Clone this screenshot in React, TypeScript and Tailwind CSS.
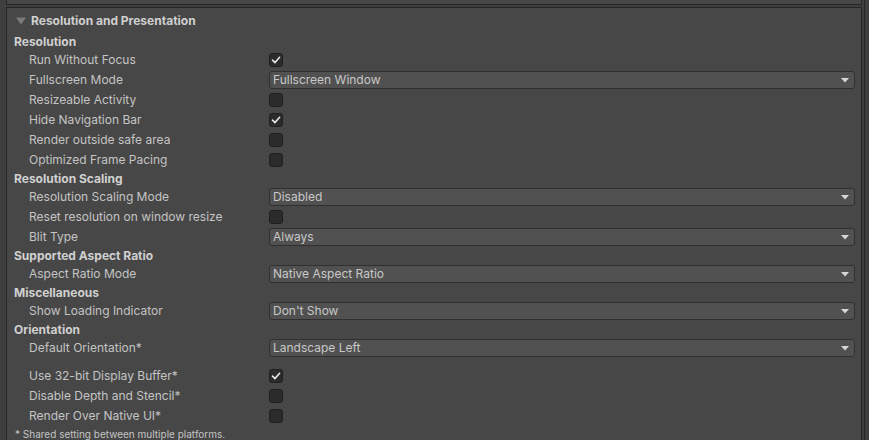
import React from "react";

type Row =
  | { kind: "header"; text: string }
  | { kind: "check"; label: string; checked: boolean }
  | { kind: "drop"; label: string; value: string }
  | { kind: "gap" };

const rows: Row[] = [
  { kind: "header", text: "Resolution" },
  { kind: "check", label: "Run Without Focus", checked: true },
  { kind: "drop", label: "Fullscreen Mode", value: "Fullscreen Window" },
  { kind: "check", label: "Resizeable Activity", checked: false },
  { kind: "check", label: "Hide Navigation Bar", checked: true },
  { kind: "check", label: "Render outside safe area", checked: false },
  { kind: "check", label: "Optimized Frame Pacing", checked: false },
  { kind: "header", text: "Resolution Scaling" },
  { kind: "drop", label: "Resolution Scaling Mode", value: "Disabled" },
  { kind: "check", label: "Reset resolution on window resize", checked: false },
  { kind: "drop", label: "Blit Type", value: "Always" },
  { kind: "header", text: "Supported Aspect Ratio" },
  { kind: "drop", label: "Aspect Ratio Mode", value: "Native Aspect Ratio" },
  { kind: "header", text: "Miscellaneous" },
  { kind: "drop", label: "Show Loading Indicator", value: "Don't Show" },
  { kind: "header", text: "Orientation" },
  { kind: "drop", label: "Default Orientation*", value: "Landscape Left" },
  { kind: "gap" },
  { kind: "check", label: "Use 32-bit Display Buffer*", checked: true },
  { kind: "check", label: "Disable Depth and Stencil*", checked: false },
  { kind: "check", label: "Render Over Native UI*", checked: false },
];

function Check({ checked }: { checked: boolean }) {
  return (
    <div className="w-[14px] h-[14px] rounded-[3px] bg-[#2b2b2b] border border-[#1f1f1f] flex items-center justify-center">
      {checked && (
        <svg width="10" height="10" viewBox="0 0 10 10">
          <path d="M1.5 5.2 L4 7.6 L8.6 2.3" fill="none" stroke="#e8e8e8" strokeWidth="1.6" strokeLinecap="round" strokeLinejoin="round" />
        </svg>
      )}
    </div>
  );
}

function Drop({ value }: { value: string }) {
  return (
    <div className="flex-1 h-[18px] rounded-[3px] bg-[#515151] border border-[#303030] flex items-center pl-[3px] pr-[5px] text-[#c8c8c8]">
      <span className="flex-1 leading-none">{value}</span>
      <svg width="8" height="5" viewBox="0 0 8 5">
        <path d="M0 0 L8 0 L4 4.5 Z" fill="#d6d6d6" />
      </svg>
    </div>
  );
}

export default function App() {
  return (
    <div
      className="w-[869px] h-[440px] bg-[#3f3f3f] overflow-hidden flex text-[12px] text-[#c4c4c4]"
      style={{ fontFamily: "Inter, 'Noto Sans', sans-serif" }}
    >
      <div className="pl-[6px] flex flex-col">
        <div className="w-[856px] h-[5px] bg-[#474747] border-l border-r border-b border-[#262626] shrink-0" />
        <div className="h-[2px] shrink-0" />
        <div className="w-[856px] flex-1 bg-[#474747] border border-[#262626] flex flex-col pt-[1px]">
          <div className="h-[24px] flex items-center pl-[9px] shrink-0">
            <svg width="10" height="8" viewBox="0 0 10 8" className="mr-[5px]">
              <path d="M0 0.5 L10 0.5 L5 7.5 Z" fill="#7a7a7a" />
            </svg>
            <span className="font-bold text-[#d0d0d0]">Resolution and Presentation</span>
          </div>
          {rows.map((r, i) => {
            if (r.kind === "gap") return <div key={i} className="h-[8px] shrink-0" />;
            if (r.kind === "header")
              return (
                <div key={i} className="h-[17px] flex items-center pl-[7px] font-bold text-[#d0d0d0] shrink-0">
                  {r.text}
                </div>
              );
            return (
              <div key={i} className="h-[20px] flex items-center shrink-0 pr-[6px]">
                <div className="w-[262px] pl-[22px] shrink-0">{r.label}</div>
                {r.kind === "check" ? <Check checked={r.checked} /> : <Drop value={r.value} />}
              </div>
            );
          })}
          <div className="h-[16px] flex items-center pl-[8px] text-[10px] shrink-0">
            * Shared setting between multiple platforms.
          </div>
        </div>
      </div>
      <div className="w-[2px]" />
      <div className="w-px h-full bg-[#262626]" />
    </div>
  );
}
